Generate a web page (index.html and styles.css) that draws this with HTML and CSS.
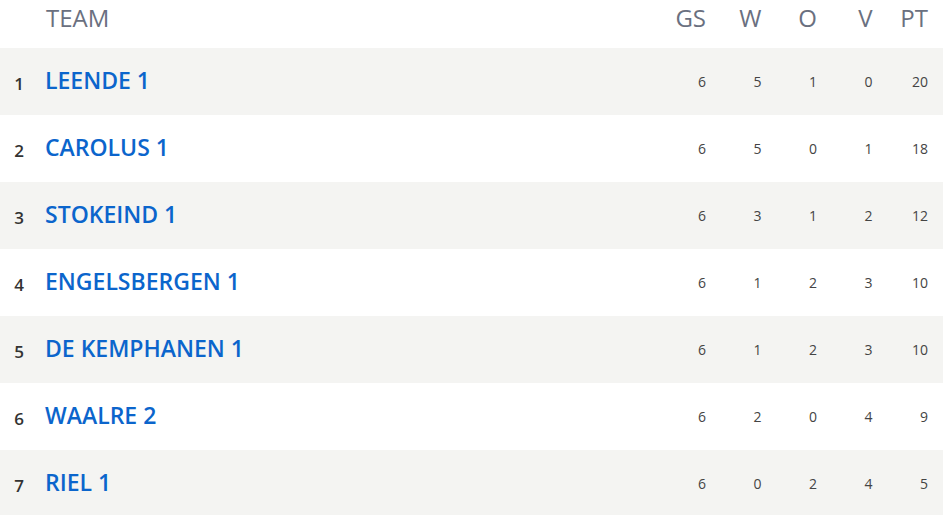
FILE: index.html
```html
<!DOCTYPE html>
<html lang="nl">
<head>
<meta charset="utf-8">
<title>Stand</title>
<link rel="stylesheet" href="styles.css">
</head>
<body>
<div class="table">
  <div class="row head">
    <div class="rank"></div>
    <div class="team">TEAM</div>
    <div class="num">GS</div>
    <div class="num">W</div>
    <div class="num">O</div>
    <div class="num">V</div>
    <div class="num">PT</div>
  </div>
  <div class="row odd">
    <div class="rank">1</div><div class="team"><a class="link">LEENDE 1</a></div>
    <div class="num">6</div><div class="num">5</div><div class="num">1</div><div class="num">0</div><div class="num">20</div>
  </div>
  <div class="row">
    <div class="rank">2</div><div class="team"><a class="link">CAROLUS 1</a></div>
    <div class="num">6</div><div class="num">5</div><div class="num">0</div><div class="num">1</div><div class="num">18</div>
  </div>
  <div class="row odd">
    <div class="rank">3</div><div class="team"><a class="link">STOKEIND 1</a></div>
    <div class="num">6</div><div class="num">3</div><div class="num">1</div><div class="num">2</div><div class="num">12</div>
  </div>
  <div class="row">
    <div class="rank">4</div><div class="team"><a class="link">ENGELSBERGEN 1</a></div>
    <div class="num">6</div><div class="num">1</div><div class="num">2</div><div class="num">3</div><div class="num">10</div>
  </div>
  <div class="row odd">
    <div class="rank">5</div><div class="team"><a class="link">DE KEMPHANEN 1</a></div>
    <div class="num">6</div><div class="num">1</div><div class="num">2</div><div class="num">3</div><div class="num">10</div>
  </div>
  <div class="row">
    <div class="rank">6</div><div class="team"><a class="link">WAALRE 2</a></div>
    <div class="num">6</div><div class="num">2</div><div class="num">0</div><div class="num">4</div><div class="num">9</div>
  </div>
  <div class="row odd">
    <div class="rank">7</div><div class="team"><a class="link">RIEL 1</a></div>
    <div class="num">6</div><div class="num">0</div><div class="num">2</div><div class="num">4</div><div class="num">5</div>
  </div>
</div>
</body>
</html>
```

FILE: styles.css
```css
html, body {
  margin: 0;
  padding: 0;
  background: #ffffff;
  font-family: "Open Sans", "Noto Sans", sans-serif;
}

.table {
  width: 943px;
}

.row {
  display: grid;
  grid-template-columns: 38px 1fr repeat(5, 55.5px);
  align-items: center;
  height: 67px;
  padding-right: 15px;
  background: #ffffff;
}

.row.odd {
  background: #f4f4f2;
}

.row.head {
  height: 48px;
  align-items: start;
  padding-top: 1px;
  box-sizing: border-box;
}

.head .team,
.head .num {
  font-size: 24px;
  font-weight: 400;
  color: #6a7080;
}

.rank {
  text-align: center;
  font-size: 17px;
  font-weight: 600;
  color: #333333;
  padding-top: 3px;
}

.team {
  padding-left: 7px;
  padding-bottom: 3px;
}

.link {
  font-size: 23px;
  font-weight: 600;
  color: #0b65cc;
  text-decoration: none;
}

.head .team {
  padding-bottom: 0;
  padding-left: 8px;
}

.num {
  text-align: right;
  font-size: 14px;
  color: #444444;
}
```
